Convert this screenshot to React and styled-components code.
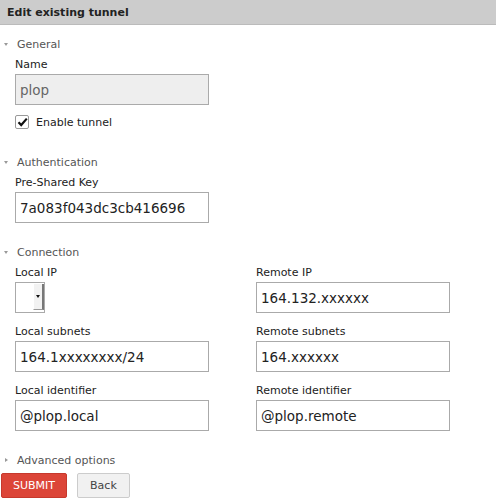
import React from 'react';
import styled, { createGlobalStyle } from 'styled-components';

const GlobalStyle = createGlobalStyle`
  body {
    margin: 0;
    background: #ffffff;
    font-family: "DejaVu Sans", Verdana, sans-serif;
    color: #222222;
  }
`;

const Header = styled.div`
  height: 24px;
  padding-left: 7px;
  display: flex;
  align-items: center;
  background: #cccccc;
  border-bottom: 1px solid #bbbbbb;
  font-size: 11px;
  font-weight: bold;
  color: #222222;
`;

const Form = styled.form`
  padding: 11px 1px 0 1px;
`;

const Section = styled.section`
  padding-bottom: ${p => (p.$gap === undefined ? 10 : p.$gap)}px;
`;

const SectionTitle = styled.div`
  display: flex;
  align-items: center;
  height: 16px;
  margin-bottom: 5px;
  font-size: 11px;
  color: #555555;
`;

const Caret = styled.span`
  width: 16px;
  display: flex;
  align-items: center;
  padding-left: 3px;
  box-sizing: border-box;

  &::before {
    content: '';
    display: block;
    width: 0;
    height: 0;
    ${p =>
      p.$open
        ? `border-left: 2.5px solid transparent;
           border-right: 2.5px solid transparent;
           border-top: 3px solid #999999;`
        : `margin-left: 1px;
           border-top: 2.5px solid transparent;
           border-bottom: 2.5px solid transparent;
           border-left: 3px solid #999999;`}
  }
`;

const Fields = styled.div`
  padding-left: 14px;
`;

const Grid = styled.div`
  padding-left: 14px;
  display: grid;
  grid-template-columns: 241px 1fr;
`;

const Field = styled.div`
  margin-bottom: 11px;
`;

const Label = styled.label`
  display: block;
  height: 16px;
  line-height: 16px;
  margin-bottom: 1px;
  font-size: 11px;
  color: #222222;
`;

const Input = styled.input`
  display: block;
  box-sizing: border-box;
  width: 194px;
  height: 31px;
  margin: 0;
  padding: 0 4px;
  border: 1px solid #aaaaaa;
  border-radius: 0;
  background: ${p => (p.disabled ? '#eeeeee' : '#ffffff')};
  color: ${p => (p.disabled ? '#666666' : '#222222')};
  font-family: "DejaVu Sans", Verdana, sans-serif;
  font-size: 13.5px;
  outline: none;
`;

const SelectBox = styled.div`
  box-sizing: border-box;
  width: 30px;
  height: 31px;
  border: 1px solid #aaaaaa;
  background: #ffffff;
  display: flex;
  justify-content: flex-end;
  padding: 1px 0 2px 0;
`;

const SelectArrow = styled.div`
  box-sizing: border-box;
  width: 11px;
  height: 100%;
  background: #f2f2f2;
  border-left: 1px solid #ffffff;
  border-right: 2px solid #777777;
  border-bottom: 1px solid #999999;
  display: flex;
  align-items: center;
  justify-content: center;

  &::before {
    content: '';
    display: block;
    border-left: 2.5px solid transparent;
    border-right: 2.5px solid transparent;
    border-top: 3px solid #111111;
  }
`;

const CheckRow = styled.label`
  display: flex;
  align-items: center;
  height: 14px;
  margin-top: -1px;
  margin-bottom: 15px;
  font-size: 11px;
  color: #222222;
`;

const CheckBox = styled.span`
  box-sizing: border-box;
  width: 14px;
  height: 14px;
  margin-right: 7px;
  border: 1px solid #999999;
  border-radius: 2px;
  background: #ffffff;
  display: flex;
  align-items: center;
  justify-content: center;
`;

const Buttons = styled.div`
  display: flex;
  gap: 10px;
  margin-top: 1px;
`;

const Button = styled.button`
  box-sizing: border-box;
  height: 25px;
  padding: 0 ${p => (p.$primary ? 11 : 12)}px;
  border: 1px solid ${p => (p.$primary ? '#c6392d' : '#cccccc')};
  border-radius: 2px;
  background: ${p => (p.$primary ? '#dc4538' : '#f1f1f1')};
  color: ${p => (p.$primary ? '#ffffff' : '#444444')};
  font-family: "DejaVu Sans", Verdana, sans-serif;
  font-size: 11px;
  cursor: pointer;
`;

const Check = () => (
  <svg width="11" height="10" viewBox="0 0 11 10">
    <path d="M1.5 5.2 L4.2 8 L9.8 1.6" fill="none" stroke="#111111" strokeWidth="2.2" />
  </svg>
);

const TextField = ({ label, value, disabled }) => (
  <Field>
    <Label>{label}</Label>
    <Input defaultValue={value} readOnly disabled={disabled} />
  </Field>
);

const App = () => (
  <>
    <GlobalStyle />
    <Header>Edit existing tunnel</Header>
    <Form onSubmit={e => e.preventDefault()}>
      <Section>
        <SectionTitle><Caret $open />General</SectionTitle>
        <Fields>
          <TextField label="Name" value="plop" disabled />
          <CheckRow>
            <CheckBox><Check /></CheckBox>
            Enable tunnel
          </CheckRow>
        </Fields>
      </Section>

      <Section>
        <SectionTitle><Caret $open />Authentication</SectionTitle>
        <Fields>
          <TextField label="Pre-Shared Key" value="7a083f043dc3cb416696" />
        </Fields>
      </Section>

      <Section>
        <SectionTitle><Caret $open />Connection</SectionTitle>
        <Grid>
          <Field>
            <Label>Local IP</Label>
            <SelectBox><SelectArrow /></SelectBox>
          </Field>
          <TextField label="Remote IP" value="164.132.xxxxxx" />
          <TextField label="Local subnets" value="164.1xxxxxxxx/24" />
          <TextField label="Remote subnets" value="164.xxxxxx" />
          <TextField label="Local identifier" value="@plop.local" />
          <TextField label="Remote identifier" value="@plop.remote" />
        </Grid>
      </Section>

      <Section $gap={0}>
        <SectionTitle><Caret />Advanced options</SectionTitle>
      </Section>

      <Buttons>
        <Button $primary type="submit">SUBMIT</Button>
        <Button type="button">Back</Button>
      </Buttons>
    </Form>
  </>
);

export default App;
